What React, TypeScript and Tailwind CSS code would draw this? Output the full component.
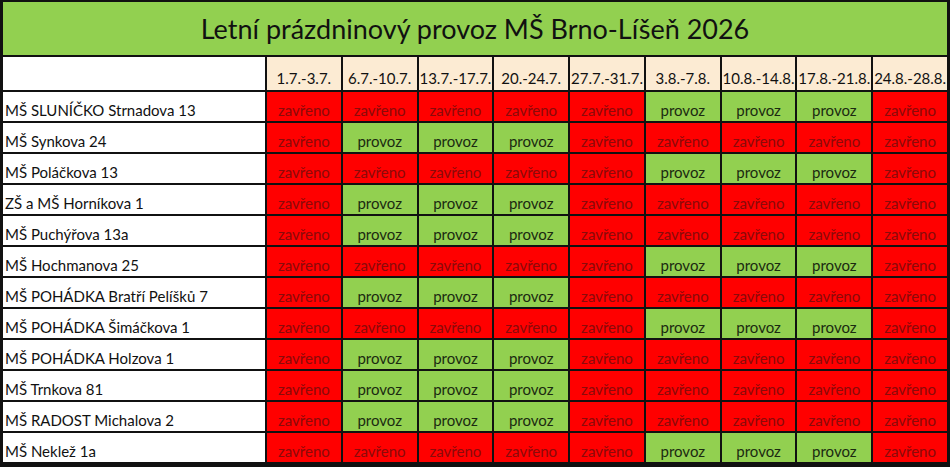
const weeks = [
  '1.7.-3.7.',
  '6.7.-10.7.',
  '13.7.-17.7.',
  '20.-24.7.',
  '27.7.-31.7.',
  '3.8.-7.8.',
  '10.8.-14.8.',
  '17.8.-21.8.',
  '24.8.-28.8.',
];

// Z = zavřeno, P = provoz
const A = 'ZZZZZPPPZ';
const B = 'ZPPPZZZZZ';

const schools: { name: string; plan: string }[] = [
  { name: 'MŠ SLUNÍČKO Strnadova 13', plan: A },
  { name: 'MŠ Synkova 24', plan: B },
  { name: 'MŠ Poláčkova 13', plan: A },
  { name: 'ZŠ a MŠ Horníkova 1', plan: B },
  { name: 'MŠ Puchýřova 13a', plan: B },
  { name: 'MŠ Hochmanova 25', plan: A },
  { name: 'MŠ POHÁDKA Bratří Pelíšků 7', plan: B },
  { name: 'MŠ POHÁDKA Šimáčkova 1', plan: A },
  { name: 'MŠ POHÁDKA Holzova 1', plan: B },
  { name: 'MŠ Trnkova 81', plan: B },
  { name: 'MŠ RADOST Michalova 2', plan: B },
  { name: 'MŠ Neklež 1a', plan: A },
];

function Cell({ open }: { open: boolean }) {
  return open ? (
    <div className="flex items-end justify-center bg-[#92d050] pb-[3px] text-[15px] leading-none text-[#1b2a10]">
      provoz
    </div>
  ) : (
    <div className="flex items-end justify-center bg-[#ff0000] pb-[3px] text-[15px] leading-none text-[#8a0a0a]">
      zavřeno
    </div>
  );
}

export default function App() {
  return (
    <div
      className="flex h-[467px] w-[950px] flex-col gap-[2px] overflow-hidden bg-[#111] pt-[2px] pr-[3px] pb-[5px] pl-[3px]"
      style={{ fontFamily: 'Lato, "Open Sans", sans-serif' }}
    >
      <div className="flex h-[53px] items-center justify-center bg-[#92d050] pt-[2px] text-[27px] text-[#111]">
        Letní prázdninový provoz MŠ Brno-Líšeň 2026
      </div>
      <div className="grid grid-cols-[262px_repeat(9,1fr)] grid-rows-[33px_repeat(12,29px)] gap-[2px]">
        <div className="bg-white" />
        {weeks.map((w) => (
          <div
            key={w}
            className="flex items-end justify-center bg-[#fcebd3] pb-[4px] text-[15px] leading-none whitespace-nowrap text-[#111]"
          >
            {w}
          </div>
        ))}
        {schools.map((s) => (
          <div key={s.name} className="contents">
            <div className="flex items-end bg-white pb-[3px] pl-[2px] text-[15px] leading-none whitespace-nowrap text-[#111]">
              {s.name}
            </div>
            {s.plan.split('').map((c, i) => (
              <Cell key={i} open={c === 'P'} />
            ))}
          </div>
        ))}
      </div>
    </div>
  );
}
